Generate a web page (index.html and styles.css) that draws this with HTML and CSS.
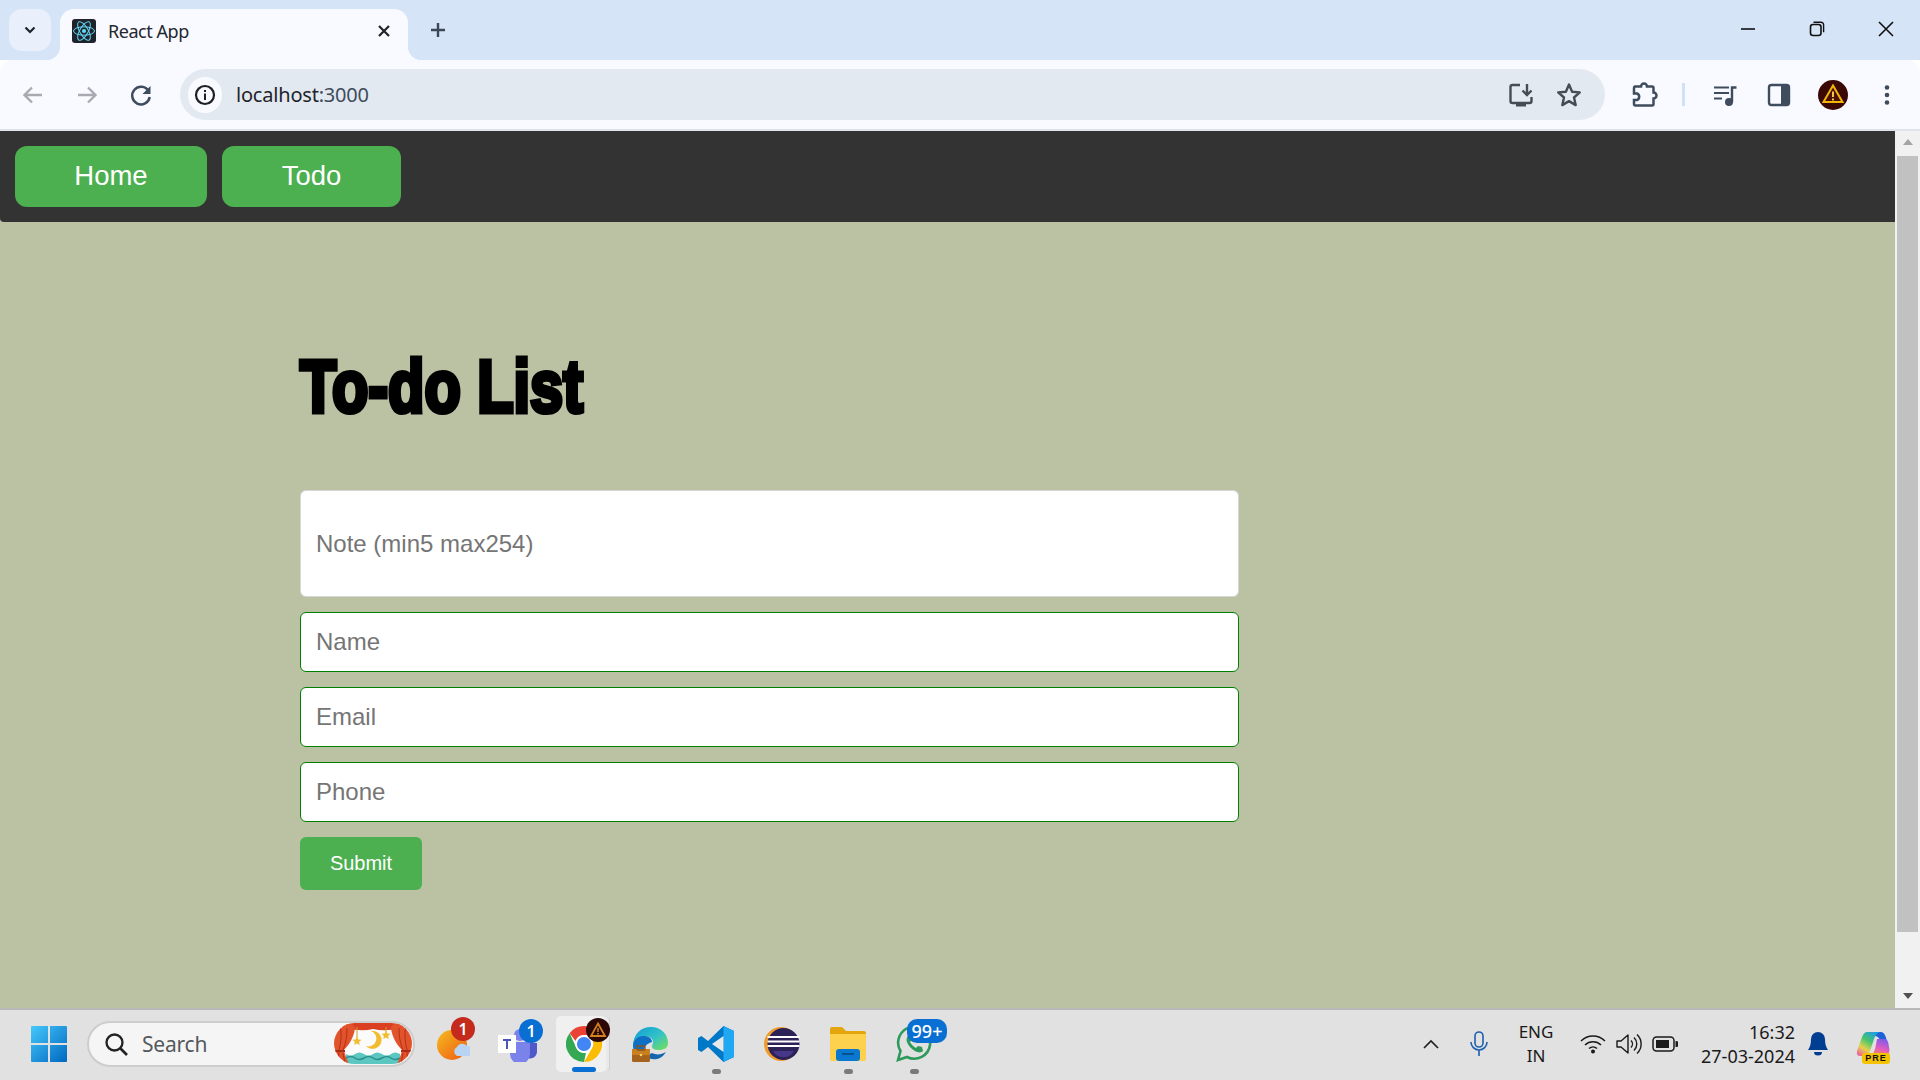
FILE: index.html
```html
<!DOCTYPE html>
<html lang="en">
<head>
<meta charset="utf-8">
<title>React App</title>
<link rel="stylesheet" href="styles.css">
</head>
<body>
<div class="screen">
  <header class="tabstrip">
    <button class="tabsearch"><svg width="16" height="16" viewBox="0 0 16 16"><path d="M3.500 5.500 8 10l4.500-4.500" fill="none" stroke="#1f2329" stroke-width="2.200"/></svg></button>
    <div class="tab">
      <svg class="favicon" width="24" height="24" viewBox="0 0 24 24"><rect width="24" height="24" rx="3" fill="#20232a"/><g fill="none" stroke="#61dafb" stroke-width="1"><ellipse cx="12" cy="12" rx="10.500" ry="4.200"/><ellipse cx="12" cy="12" rx="10.500" ry="4.200" transform="rotate(60 12 12)"/><ellipse cx="12" cy="12" rx="10.500" ry="4.200" transform="rotate(120 12 12)"/></g><circle cx="12" cy="12" r="2.100" fill="#61dafb"/></svg>
      <span class="tabtitle">React App</span>
      <svg class="tabclose" width="14" height="14" viewBox="0 0 14 14"><path d="M2 2l10 10M12 2 2 12" stroke="#1f2329" stroke-width="2.200"/></svg>
    </div>
    <svg class="newtab" width="18" height="18" viewBox="0 0 18 18"><path d="M9 2v14M2 9h14" stroke="#3c4858" stroke-width="2.400"/></svg>
    <div class="winctl">
      <svg width="16" height="16" viewBox="0 0 16 16"><path d="M1 8h14" stroke="#111" stroke-width="1.600"/></svg>
      <svg width="16" height="16" viewBox="0 0 16 16"><rect x="1.500" y="3.500" width="10.500" height="11" rx="2.500" fill="none" stroke="#111" stroke-width="1.600"/><path d="M4.500 1.200h7.500a2.600 2.600 0 0 1 2.600 2.600v7.400" fill="none" stroke="#111" stroke-width="1.400"/></svg>
      <svg width="16" height="16" viewBox="0 0 16 16"><path d="M1 1l14 14M15 1 1 15" stroke="#111" stroke-width="1.600"/></svg>
    </div>
  </header>

  <div class="toolbar">
    <svg class="tool" width="36" height="36" viewBox="0 0 36 36"><path d="M27 18H10M17 10.500 9.500 18l7.500 7.500" fill="none" stroke="#a7abb1" stroke-width="2.400"/></svg>
    <svg class="tool fwd" width="36" height="36" viewBox="0 0 36 36"><path d="M9 18h17M19 10.500l7.500 7.500-7.500 7.500" fill="none" stroke="#a7abb1" stroke-width="2.400"/></svg>
    <svg class="tool fwd" width="36" height="36" viewBox="0 0 36 36"><path d="M25.500 14a8.800 8.800 0 1 0 1.200 6" fill="none" stroke="#3f4c5e" stroke-width="2.500"/><path d="M27.500 9v8h-8z" fill="#3f4c5e"/></svg>
    <div class="omnibox">
      <span class="infochip"><svg width="22" height="22" viewBox="0 0 22 22"><circle cx="11" cy="11" r="9" fill="none" stroke="#1c1f24" stroke-width="2.200"/><rect x="10" y="9.500" width="2" height="6.500" fill="#1c1f24"/><rect x="10" y="6" width="2" height="2" fill="#1c1f24"/></svg></span>
      <span class="url">localhost<span class="port">:3000</span></span>
      <svg class="tool omni-end" width="36" height="36" viewBox="0 0 36 36"><path d="M17 8H9.500a2 2 0 0 0-2 2v14a2 2 0 0 0 2 2h17a2 2 0 0 0 2-2v-4" fill="none" stroke="#474c52" stroke-width="2.400"/><path d="M24 7v11M19.500 13.500 24 18l4.500-4.500" fill="none" stroke="#474c52" stroke-width="2.400"/><rect x="13" y="26" width="10" height="3.500" fill="#474c52"/></svg>
      <svg class="tool star" width="36" height="36" viewBox="0 0 36 36"><path d="M18 7.500l3.100 7.200 7.700.7-5.800 5.100 1.700 7.600-6.700-4-6.700 4 1.700-7.600-5.800-5.100 7.700-.7z" fill="none" stroke="#474c52" stroke-width="2.400" stroke-linejoin="round"/></svg>
    </div>
    <svg class="tool puzzle" width="36" height="36" viewBox="0 0 36 36"><path d="M9 9.500h6a3 3 0 0 1 6 0h5a1.500 1.500 0 0 1 1.500 1.500v4.500a3 3 0 0 1 0 6V27a1.500 1.500 0 0 1-1.500 1.500H9.500A1.500 1.500 0 0 1 8 27v-4h3a3.500 3.500 0 0 0 0-6.500H8V11a1.500 1.500 0 0 1 1-1.500z" fill="none" stroke="#3f4c5e" stroke-width="2.500"/></svg>
    <span class="sep"></span>
    <svg class="tool media" width="36" height="36" viewBox="0 0 36 36"><path d="M7 10.500h15M7 16h15M7 21.500h8" stroke="#3f4c5e" stroke-width="2.200"/><circle cx="22" cy="25" r="4" fill="#3f4c5e"/><path d="M25 25V10.500h4.500" fill="none" stroke="#3f4c5e" stroke-width="2.400"/></svg>
    <svg class="tool fwd" width="36" height="36" viewBox="0 0 36 36"><rect x="8" y="8" width="20" height="20" rx="2.500" fill="none" stroke="#3f4c5e" stroke-width="2.400"/><path d="M20 8h6a2 2 0 0 1 2 2v16a2 2 0 0 1-2 2h-6z" fill="#3f4c5e"/></svg>
    <svg class="tool fwd" width="36" height="36" viewBox="0 0 36 36"><circle cx="18" cy="18" r="15" fill="#3a0805"/><path d="M18 8.500 27.500 25h-19z" fill="#4a0f08" stroke="#f2b705" stroke-width="2"/><path d="M18 14.500v5.500M18 21.500v2" stroke="#f6c945" stroke-width="2"/></svg>
    <svg class="tool fwd" width="36" height="36" viewBox="0 0 36 36"><circle cx="18" cy="10.500" r="2.300" fill="#3f4c5e"/><circle cx="18" cy="18" r="2.300" fill="#3f4c5e"/><circle cx="18" cy="25.500" r="2.300" fill="#3f4c5e"/></svg>
  </div>
  <div class="chromeline"></div>

  <div class="viewport">
    <div class="page">
      <nav class="topnav">
        <a class="navbtn home">Home</a>
        <a class="navbtn todo">Todo</a>
      </nav>
      <main class="content">
        <h1 class="title">To-do List</h1>
        <form class="form">
          <input class="field note" placeholder="Note (min5 max254)">
          <input class="field" placeholder="Name">
          <input class="field" placeholder="Email">
          <input class="field" placeholder="Phone">
          <button type="button" class="submit">Submit</button>
        </form>
      </main>
    </div>
    <aside class="scrollbar">
      <span class="arrow up"></span>
      <span class="thumb"></span>
      <span class="arrow down"></span>
    </aside>
  </div>

  <footer class="taskbar">
    <div class="startbtn">
      <svg width="36" height="36" viewBox="0 0 36 36"><defs><linearGradient id="win" x1="0" y1="0" x2="1" y2="1"><stop offset="0" stop-color="#45c8fb"/><stop offset="1" stop-color="#0067c0"/></linearGradient></defs><path d="M1 0h16v17H0V1a1 1 0 0 1 1-1zM19 0h16a1 1 0 0 1 1 1v16H19zM0 19h17v17H1a1 1 0 0 1-1-1zM19 19h17v16a1 1 0 0 1-1 1H19z" fill="url(#win)"/></svg>
    </div>
    <div class="search">
      <svg width="24" height="24" viewBox="0 0 24 24"><circle cx="10.500" cy="10.500" r="8" fill="none" stroke="#222" stroke-width="2.300"/><path d="M16.500 16.500 23 23" stroke="#222" stroke-width="2.600"/></svg>
      <span class="searchtext">Search</span>
      <svg class="banner" width="78" height="41" viewBox="0 0 78 41"><defs><clipPath id="bclip"><rect width="78" height="41" rx="20.500"/></clipPath></defs><g clip-path="url(#bclip)"><rect width="78" height="41" fill="#fbfbfb"/><path d="M12 31q5 3 9 0t9 0 9 0 9 0 9 0 9 0v10H12z" fill="#5cc7c0"/><path d="M12 35q5-3 9 0t9 0 9 0 9 0 9 0 9 0" fill="none" stroke="#2b8f8d" stroke-width="1.500"/><path d="M0 0h78v3q-6 1-12 2-14 4-27 1-12 3-27-1-6-1-12-2z" fill="#d93f20"/><path d="M0 0h11c7 0 10 3 10 5-1 10-7 18-11 22 1 5 3 10 5 14H0z" fill="#e2532c"/><path d="M78 0H67c-7 0-10 3-10 5 1 10 7 18 11 22-1 5-3 10-5 14h15z" fill="#e2532c"/><path d="M6 3c2 8 1 16-1 24M13 5c0 8-1 15-4 22M72 3c-2 8-1 16 1 24M65 5c0 8 1 15 4 22M5 29l-1 12M9 30l2 11M73 29l1 12M69 30l-2 11" stroke="#b1321a" fill="none"/><path d="M0 27h11v2H0zM67 27h11v2H67z" fill="#a82c16"/><path d="M23 4v11M52 4v5" stroke="#c9a227"/><path d="M23 13.500l1.300 3 3.200.3-2.400 2.100.7 3.200-2.800-1.700-2.800 1.700.7-3.200-2.400-2.100 3.200-.3zM52 7.500l1.300 3 3.200.3-2.400 2.100.7 3.200-2.800-1.700-2.800 1.700.7-3.200-2.400-2.100 3.200-.3z" fill="#f2bc2e"/><path d="M37 8a9 9 0 1 1-5 15 7.500 7.500 0 0 0 5-15z" fill="#f2bc2e"/></g></svg>
    </div>

    <div class="tbitem">
      <svg width="36" height="36" viewBox="0 0 36 36"><defs><linearGradient id="sun" x1="0" y1="0" x2="1" y2="1"><stop offset="0" stop-color="#f5bb1f"/><stop offset="1" stop-color="#ee5a12"/></linearGradient></defs><circle cx="18" cy="19" r="15" fill="url(#sun)"/><path d="M23 30a5 5 0 0 1 0-9 6 6 0 0 1 10-1 5 5 0 0 1 2 10z" fill="#b8d4f2"/></svg>
      <span class="badge red b-weather">1</span>
    </div>
    <div class="tbitem">
      <svg width="44" height="36" viewBox="0 0 44 36"><circle cx="36" cy="12" r="4.500" fill="#5059c9"/><path d="M28 17h13v9a7 7 0 0 1-13 3z" fill="#5059c9"/><circle cx="24" cy="9" r="6" fill="#7b83eb"/><path d="M14 16h20v12a10 10 0 0 1-20 0z" fill="#7b83eb"/><rect x="2" y="9" width="18" height="18" fill="#fff"/><path d="M7 13h8v2h-3v8h-2v-8H7z" fill="#4b53bc"/></svg>
      <span class="badge blue b-teams">1</span>
    </div>
    <div class="tbitem active">
      <span class="tile"></span>
      <svg class="raised" width="36" height="36" viewBox="0 0 36 36"><circle cx="18" cy="18" r="18" fill="#fff"/><path d="M18 0a18 18 0 0 1 15.600 9H18a9 9 0 0 0-8.500 6L3.600 7.200A18 18 0 0 1 18 0z" fill="#ea4335"/><path d="M33.600 9A18 18 0 0 1 18 36l7.800-13.500A9 9 0 0 0 25 12z" fill="#fbbc04"/><path d="M18 36A18 18 0 0 1 3.600 7.200L10.500 22a9 9 0 0 0 9.500 4.700z" fill="#34a853"/><circle cx="18" cy="18" r="8" fill="#4285f4" stroke="#fff" stroke-width="1.800"/></svg>
      <svg class="badge-icon" width="24" height="24" viewBox="0 0 24 24"><circle cx="12" cy="12" r="12" fill="#2c0906"/><path d="M12 5.500 19 18H5z" fill="none" stroke="#d4821e" stroke-width="1.800"/><path d="M12 10v4M12 15v1.500" stroke="#d4821e" stroke-width="1.500"/></svg>
      <span class="pill current"></span>
    </div>
    <div class="tbitem">
      <svg width="36" height="36" viewBox="0 0 36 36"><defs><linearGradient id="edge" x1="0" y1="0" x2="1" y2="1"><stop offset="0" stop-color="#0c9cd6"/><stop offset=".55" stop-color="#34c3c6"/><stop offset="1" stop-color="#7ae04f"/></linearGradient></defs><path d="M1 20C1 8 9 1 19 1c10 0 17 7 17 16 0 5-4 7-9 7-4 0-7-1-7-4 0-1 1-2 1-4 0-4-4-6-8-5-6 1-9 6-9 11z" fill="url(#edge)"/><path d="M1 20c0-6 5-10 10-10 5 0 9 2 9 6-4 1-8 4-8 9 0 4 2 8 6 10C8 35 1 29 1 20z" fill="#0f6fc5"/><path d="M14 30c3 4 14 6 20-4-5 3-10 3-14 1z" fill="#1466b0"/><rect x="0" y="23" width="18" height="13" rx="1.500" fill="#a5631c"/><rect x="0" y="23" width="18" height="6" fill="#c98022"/><rect x="5" y="20" width="8" height="4" rx="1" fill="none" stroke="#8a5316" stroke-width="1.300"/><circle cx="9" cy="29" r="1.300" fill="#f4d35e"/></svg>
    </div>
    <div class="tbitem">
      <svg width="36" height="36" viewBox="0 0 36 36"><path d="M25.500 0 36 5v26l-10.500 5L10 21l-6.500 5L0 24V12l3.500-2L10 15z" fill="#0078c8"/><path d="M25.500 0 36 5v26l-10.500 5z" fill="#20a8f3"/><path d="M25.500 10v16L14 18z" fill="#e8e8e8"/></svg>
      <span class="pill run"></span>
    </div>
    <div class="tbitem">
      <svg width="36" height="36" viewBox="0 0 36 36"><circle cx="17" cy="18" r="17" fill="#f19b2c"/><circle cx="19.500" cy="18" r="16" fill="#2c2255"/><path d="M3.500 11h32M3.500 15.500h32M3.500 20h32" stroke="#fff" stroke-width="1.800"/><path d="M9 25h21a12 12 0 0 1-21 0z" fill="#473788"/></svg>
    </div>
    <div class="tbitem">
      <svg width="36" height="34" viewBox="0 0 36 34"><path d="M0 2a2 2 0 0 1 2-2h10l4 4h18a2 2 0 0 1 2 2v6H0z" fill="#e3a60c"/><path d="M0 7h36v25a2 2 0 0 1-2 2H2a2 2 0 0 1-2-2z" fill="#fdd04e"/><rect x="6" y="22" width="24" height="12" rx="3" fill="#0a78cf"/><rect x="12" y="26" width="12" height="1.800" fill="#054d8c"/></svg>
      <span class="pill run"></span>
    </div>
    <div class="tbitem">
      <svg width="36" height="36" viewBox="0 0 36 36"><path d="M2 34l2.500-9A16 16 0 1 1 11 31z" fill="none" stroke="#2b9a5b" stroke-width="2.600"/><path d="M12 10c-3 3-1 8 3 12s9 6 12 3l-1-4-4-1-2 2c-2-1-5-4-6-6l2-2-1-4z" fill="#2b9a5b"/></svg>
      <span class="badge blue b-wa">99+</span>
      <span class="pill run"></span>
    </div>

    <div class="tray">
      <span class="trayitem w48"><svg width="16" height="10" viewBox="0 0 16 10"><path d="M1 9l7-7 7 7" fill="none" stroke="#222" stroke-width="1.700"/></svg></span>
      <span class="trayitem w48"><svg width="20" height="26" viewBox="0 0 20 26"><rect x="6" y="1" width="8" height="15" rx="4" fill="none" stroke="#1c5fae" stroke-width="1.600"/><path d="M2 11a8 8 0 0 0 16 0M10 19v6" fill="none" stroke="#1c5fae" stroke-width="1.600"/></svg></span>
      <span class="lang">ENG<br>IN</span>
      <span class="trayitem w36"><svg width="26" height="20" viewBox="0 0 26 20"><path d="M1 7a17 17 0 0 1 24 0M5 11a11.500 11.500 0 0 1 16 0M9 14.500a6 6 0 0 1 8 0" fill="none" stroke="#1a1a1a" stroke-width="1.500"/><circle cx="13" cy="17.500" r="2" fill="#1a1a1a"/></svg></span>
      <span class="trayitem w36"><svg width="26" height="22" viewBox="0 0 26 22"><path d="M1 8h4l7-6v18l-7-6H1z" fill="none" stroke="#1a1a1a" stroke-width="1.400" stroke-linejoin="round"/><path d="M15 7.500a5 5 0 0 1 0 7M18 4.500a9 9 0 0 1 0 13M21 1.500a13 13 0 0 1 0 19" fill="none" stroke="#1a1a1a" stroke-width="1.400"/></svg></span>
      <span class="trayitem w36"><svg width="26" height="16" viewBox="0 0 26 16"><rect x="1" y="1" width="21" height="14" rx="3.500" fill="none" stroke="#1a1a1a" stroke-width="1.500"/><rect x="4" y="4" width="13" height="8" fill="#1a1a1a"/><path d="M23.500 5h.5a2 2 0 0 1 0 6h-.5z" fill="#1a1a1a"/></svg></span>
      <span class="clock">16:32<br>27-03-2024</span>
      <span class="trayitem bell"><svg width="20" height="24" viewBox="0 0 20 24"><path d="M10 0a7 7 0 0 1 7 7c0 5 1 8 3 11H0c2-3 3-6 3-11a7 7 0 0 1 7-7z" fill="#003e92"/><path d="M6 20h8a4 3.500 0 0 1-8 0z" fill="#003e92"/></svg></span>
      <span class="trayitem copilot"><svg width="34" height="26" viewBox="0 0 34 26"><defs><linearGradient id="cpl" x1=".8" y1="0" x2=".2" y2="1"><stop offset="0" stop-color="#1f9ce8"/><stop offset=".4" stop-color="#45c46c"/><stop offset=".72" stop-color="#e6d24c"/><stop offset="1" stop-color="#ea6a98"/></linearGradient><linearGradient id="cpr" x1=".7" y1="0" x2=".3" y2="1"><stop offset="0" stop-color="#7a5bea"/><stop offset=".55" stop-color="#e35cc0"/><stop offset="1" stop-color="#f08a5a"/></linearGradient></defs><path d="M14 1H25Q29 1 30.500 9H24Q22 5 19 5Z" fill="#1f62d8"/><path d="M21 8H29Q31.500 8 32.500 13L33.500 19Q33.500 24.500 28 24.500H14Q18 23.500 19.500 16Z" fill="url(#cpr)"/><path d="M11 1H24Q20 2 18 8L14 20Q12 25 7 25H4Q0 25 1 20L6 6Q8 1 11 1Z" fill="url(#cpl)"/></svg><span class="prebadge">PRE</span></span>
    </div>
  </footer>
</div>
</body>
</html>
```
FILE: styles.css
```css
* { box-sizing: border-box; }
html, body { margin: 0; padding: 0; height: 100%; overflow: hidden; }
body { font-family: "Liberation Sans", Arial, sans-serif; }
svg { display: block; flex: none; }

.screen { width: 1920px; height: 1080px; display: flex; flex-direction: column; }

/* Browser tab strip */
.tabstrip { height: 60px; background: #d5e4f6; display: flex; align-items: flex-start; padding-left: 9px; }
.tabsearch { width: 42px; height: 42px; margin-top: 9px; border: 0; padding: 0; border-radius: 13px; background: #e9f0fb; display: flex; align-items: center; justify-content: center; }
.tab { position: relative; width: 348px; height: 51px; margin: 9px 0 0 9px; background: #f8faff; border-radius: 14px 14px 0 0; display: flex; align-items: center; padding: 0 17px 8px 12px; }
.tab::before, .tab::after { content: ""; position: absolute; bottom: 0; width: 14px; height: 14px; }
.tab::before { left: -14px; background: radial-gradient(circle at 0 0, transparent 14px, #f8faff 14.5px); }
.tab::after { right: -14px; background: radial-gradient(circle at 100% 0, transparent 14px, #f8faff 14.5px); }
.tabtitle { margin-left: 12px; font: 18px "Noto Sans", "Open Sans", sans-serif; letter-spacing: -0.45px; color: #23272e; flex: 1; }
.newtab { margin: 21px 0 0 21px; }
.winctl { margin-left: auto; margin-top: 21px; display: flex; gap: 53px; padding-right: 26px; }

/* Toolbar */
.toolbar { height: 69px; background: #f8faff; border-radius: 14px 14px 0 0; display: flex; align-items: center; padding: 0 15px; }
.chromeline { height: 2px; background: #dfe3ea; }
.fwd { margin-left: 18px; }
.omnibox { flex: 1; height: 51px; margin: 0 21px 0 21px; background: #e3e9f1; border-radius: 26px; display: flex; align-items: center; padding: 0 18px 0 8px; }
.infochip { width: 34px; height: 36px; border-radius: 18px; background: #f8faff; display: flex; align-items: center; justify-content: center; }
.url { margin-left: 14px; font: 20px "Noto Sans", "Open Sans", sans-serif; letter-spacing: -0.2px; color: #1f2329; }
.port { color: #3f4c5e; }
.omni-end { margin-left: auto; }
.star { margin-left: 12px; }
.sep { width: 3px; height: 23px; margin: 0 22px 0 20px; background: #cfe0f7; }

/* Page viewport */
.viewport { height: 877px; display: flex; }
.page { flex: 1; background: #bbc2a4; display: flex; flex-direction: column; }
.topnav { height: 91px; background: #333; display: flex; gap: 15px; padding: 15px; border-radius: 0 0 0 4px; }
.navbtn { height: 61px; padding-bottom: 1px; display: flex; align-items: center; justify-content: center; border-radius: 12px; background: #4caf50; color: #fff; font-size: 27.500px; }
.home { width: 192px; }
.todo { width: 179px; }
.content { padding: 117px 0 0 298px; }
.title { width: max-content; margin: 0 0 57px 2px; transform: scaleX(.793); transform-origin: 0 50%; font: 700 75px/94px "Liberation Sans", sans-serif; -webkit-text-stroke: 5px #000; color: #000; letter-spacing: 0; }
.form { width: 941px; padding-left: 2px; display: flex; flex-direction: column; gap: 15px; }
.field { width: 939px; height: 60px; padding: 0 15px; background: #fff; border: 1px solid #008000; border-radius: 6px; font: 24px "Liberation Sans", Arial, sans-serif; outline: 0; }
.field::placeholder { color: #757575; opacity: 1; }
.note { height: 107px; border: 1px solid #d6d6d6; }
.submit { width: 122px; height: 53px; border: 0; border-radius: 6px; background: #4caf50; color: #fff; font: 20px "Liberation Sans", Arial, sans-serif; }

/* Scrollbar */
.scrollbar { width: 25px; background: #f1f1f1; display: flex; flex-direction: column; align-items: center; padding-top: 8px; }
.arrow { width: 0; height: 0; border-left: 5.500px solid transparent; border-right: 5.500px solid transparent; }
.arrow.up { border-bottom: 6px solid #a3a3a3; }
.thumb { width: 21px; height: 776px; margin-top: 11px; background: #c1c1c1; }
.arrow.down { margin-top: 61px; border-top: 6px solid #505050; }

/* Taskbar */
.taskbar { height: 72px; background: #e1e1e1; border-top: 2px solid #b9b9b9; display: flex; align-items: center; padding: 0 0 3px 31px; font-family: "Noto Sans", "Open Sans", sans-serif; }
.startbtn { width: 36px; }
.search { width: 328px; height: 46px; margin: 0 4px 0 20px; background: #f5f5f5; border: 2px solid #cdcdcd; border-radius: 23px; display: flex; align-items: center; padding: 0 1px 0 15px; }
.searchtext { margin-left: 14px; font-size: 21px; color: #55585c; letter-spacing: -0.2px; }
.banner { margin-left: auto; }
.tbitem { position: relative; width: 66px; height: 66px; display: flex; align-items: center; justify-content: center; }
.tile { position: absolute; left: 5px; top: 5px; width: 50px; height: 56px; background: #f0f0f0; border-radius: 5px; box-shadow: 4px 0 0 -1px #e9e9e9, 5px 0 0 -1px #cfcfcf; }
.raised { position: relative; }
.badge { position: absolute; display: flex; align-items: center; justify-content: center; height: 24px; min-width: 24px; border-radius: 12px; color: #fff; font-size: 16px; font-weight: 600; }
.red { background: #c42b1c; }
.blue { background: #0a6fd2; }
.b-weather { left: 32px; top: 6px; }
.b-teams { left: 34px; top: 8px; }
.b-wa { left: 26px; top: 8px; width: 40px; border-radius: 10px; font-size: 18px; font-weight: 500; }
.badge-icon { position: absolute; left: 35px; top: 7px; }
.pill { position: absolute; bottom: 3px; left: 50%; height: 5px; border-radius: 3px; }
.current { width: 24px; margin-left: -12px; background: #0a6fd2; bottom: 5px; }
.run { width: 9px; margin-left: -4px; background: #7a7a7a; }
.tray { margin-left: auto; display: flex; align-items: center; padding-right: 15px; color: #1a1a1a; }
.trayitem { display: flex; align-items: center; justify-content: center; }
.w48 { width: 48px; }
.w36 { width: 36px; }
.lang { width: 64px; margin: 0 7px 0 1px; text-align: center; font-size: 17px; line-height: 24px; }
.clock { width: 112px; text-align: right; font-size: 18px; line-height: 24px; }
.bell { width: 46px; }
.copilot { position: relative; width: 64px; height: 36px; }
.prebadge { position: absolute; left: 21px; top: 27px; width: 28px; height: 11px; border-radius: 3px; background: #f5c200; color: #111; font: 700 9px/11px "Liberation Sans", sans-serif; letter-spacing: 1px; text-align: center; }
```
